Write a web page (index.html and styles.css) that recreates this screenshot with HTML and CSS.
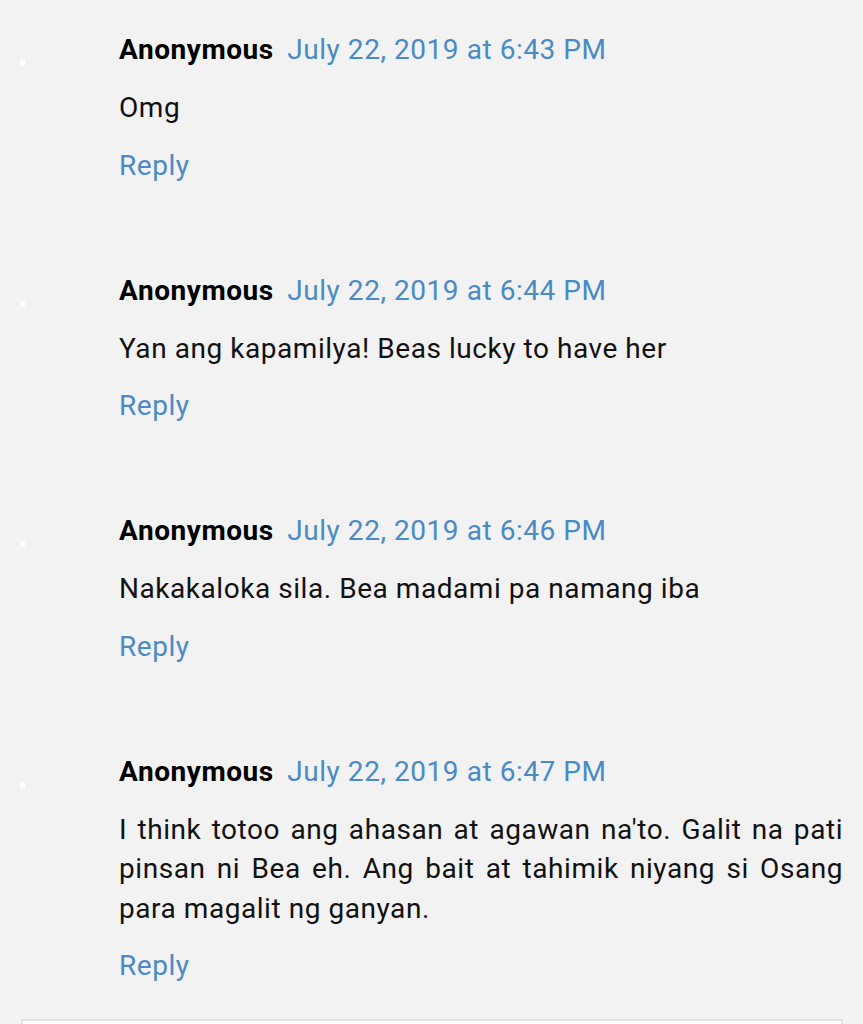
FILE: index.html
```html
<!DOCTYPE html>
<html lang="en">

<head>
  <meta charset="UTF-8">
  <meta name="viewport" content="width=device-width, initial-scale=1.0">
  <title>Comments</title>
  <link rel="stylesheet" href="styles.css">
</head>

<body>
  <ol class="comments">
    <li class="comment">
      <div class="avatar"><span class="avatar-img"></span></div>
      <div class="comment-block">
        <div class="comment-header">
          <cite class="user">Anonymous</cite>
          <a class="datetime" href="#">July 22, 2019 at 6:43 PM</a>
        </div>
        <p class="comment-content">Omg</p>
        <a class="reply" href="#">Reply</a>
      </div>
    </li>
    <li class="comment">
      <div class="avatar"><span class="avatar-img"></span></div>
      <div class="comment-block">
        <div class="comment-header">
          <cite class="user">Anonymous</cite>
          <a class="datetime" href="#">July 22, 2019 at 6:44 PM</a>
        </div>
        <p class="comment-content">Yan ang kapamilya! Beas lucky to have her</p>
        <a class="reply" href="#">Reply</a>
      </div>
    </li>
    <li class="comment">
      <div class="avatar"><span class="avatar-img"></span></div>
      <div class="comment-block">
        <div class="comment-header">
          <cite class="user">Anonymous</cite>
          <a class="datetime" href="#">July 22, 2019 at 6:46 PM</a>
        </div>
        <p class="comment-content">Nakakaloka sila. Bea madami pa namang iba</p>
        <a class="reply" href="#">Reply</a>
      </div>
    </li>
    <li class="comment">
      <div class="avatar"><span class="avatar-img"></span></div>
      <div class="comment-block">
        <div class="comment-header">
          <cite class="user">Anonymous</cite>
          <a class="datetime" href="#">July 22, 2019 at 6:47 PM</a>
        </div>
        <p class="comment-content">I think totoo ang ahasan at agawan na'to. Galit na pati pinsan ni Bea eh. Ang bait at tahimik niyang si Osang para magalit ng ganyan.</p>
        <a class="reply" href="#">Reply</a>
      </div>
    </li>
  </ol>
  <div class="comment-box"></div>
</body>

</html>
```

FILE: styles.css
```css
body {
  margin: 0;
  background: #f2f2f2;
  font-family: Roboto, 'Noto Sans', sans-serif;
  color: #111;
  font-size: 28px;
  letter-spacing: 0.55px;
}

.comments {
  list-style: none;
  margin: 0;
  padding: 30px 20px 0 20px;
}

.comment {
  display: grid;
  grid-template-columns: 99px 1fr;
  padding-bottom: 85px;
}

.comment:last-child {
  padding-bottom: 33px;
}

.avatar {
  padding-top: 30px;
}

.avatar-img {
  display: block;
  width: 5px;
  height: 6px;
  background: #fff;
}

.comment-header {
  line-height: 40px;
}

.user {
  font-style: normal;
  font-weight: bold;
  color: #000;
  margin-right: 6px;
}

.datetime,
.reply {
  color: #4a8ac6;
  text-decoration: none;
}

.comment-content {
  margin: 18px 0 0;
  line-height: 39.5px;
  text-align: justify;
}

.reply {
  display: inline-block;
  margin-top: 18px;
  line-height: 40px;
}

.comment-box {
  margin: 0 20px 0 21px;
  height: 40px;
  background: #fff;
  border: 2px solid #e2e2e2;
}
```
